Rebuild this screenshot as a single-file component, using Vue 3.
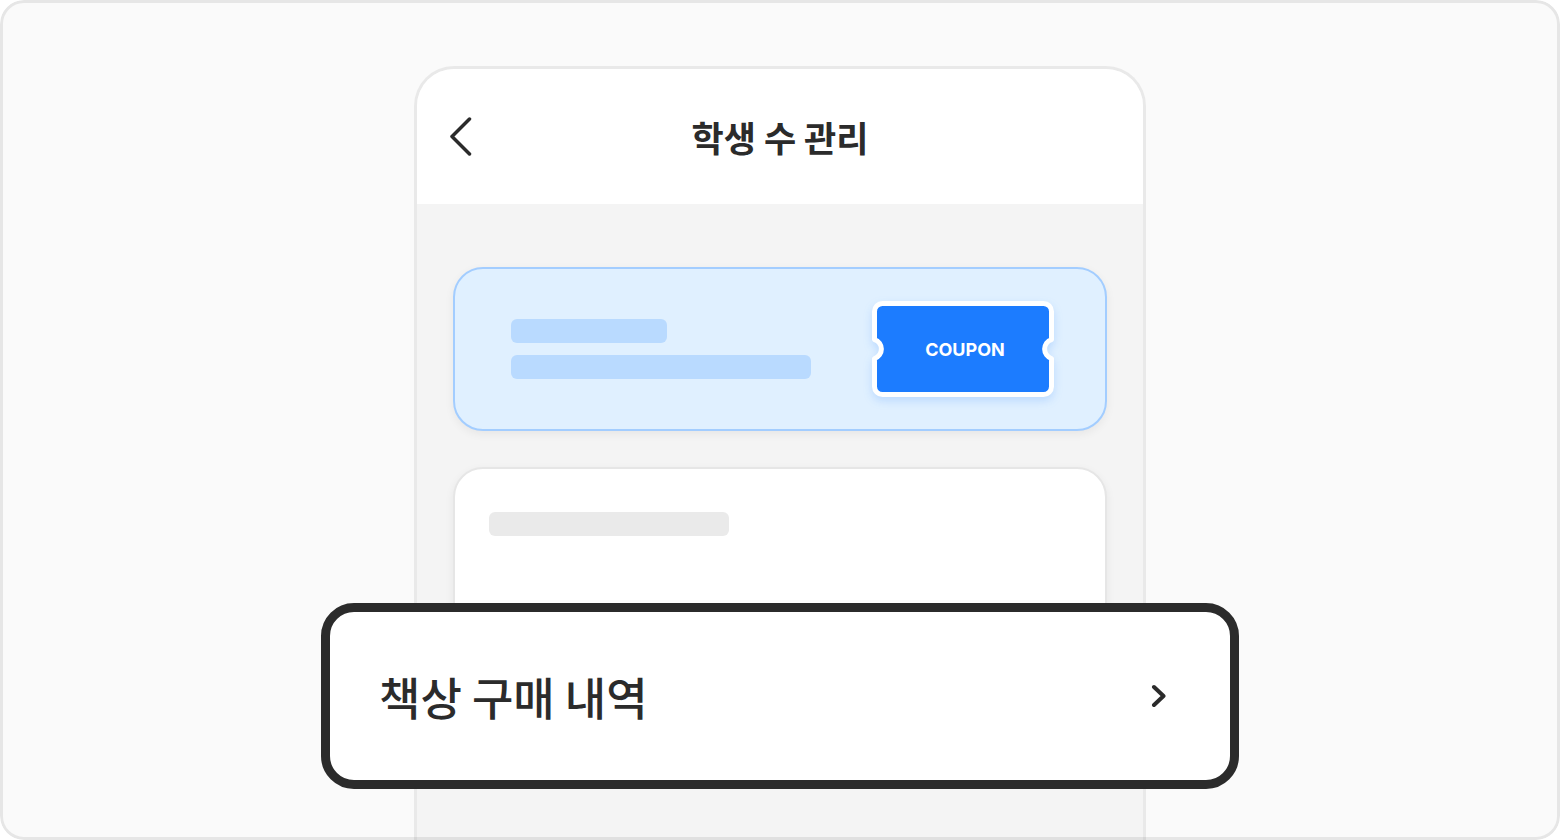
<script setup>
const title = '학생 수 관리'
const rowLabel = '책상 구매 내역'
</script>

<template>
  <main class="stage">
    <section class="phone">
      <header class="bar">
        <button class="back" type="button" aria-label="뒤로">
          <svg width="24" height="40" viewBox="0 0 24 40" fill="none" aria-hidden="true">
            <path d="M20.500 2 3 19.500l17.500 17.500" stroke="#2b2b2b" stroke-width="3.500" stroke-linecap="round" stroke-linejoin="round" />
          </svg>
        </button>
        <h1 class="title">{{ title }}</h1>
      </header>

      <div class="content">
        <article class="card promo">
          <div class="lines">
            <span class="line short"></span>
            <span class="line"></span>
          </div>
          <div class="coupon">
            <svg class="ticket" width="182" height="96" viewBox="0 0 182 96" aria-hidden="true">
              <path
                d="M10.500 2.500H171.500A8 8 0 0 1 179.500 10.500V38.500A10 10 0 0 0 179.500 57.500V85.500A8 8 0 0 1 171.500 93.500H10.500A8 8 0 0 1 2.500 85.500V57.500A10 10 0 0 0 2.500 38.500V10.500A8 8 0 0 1 10.500 2.500Z"
                fill="#1c7cff" stroke="#fff" stroke-width="5" stroke-linejoin="round"
              />
            </svg>
            <span class="coupon-text">COUPON</span>
          </div>
        </article>

        <article class="card panel">
          <span class="line gray"></span>
        </article>

        <button class="row" type="button">
          <span class="row-label">{{ rowLabel }}</span>
          <svg width="16" height="24" viewBox="0 0 16 24" fill="none" aria-hidden="true">
            <path d="M4 3l9.500 9L4 21" stroke="#2b2b2b" stroke-width="4" stroke-linecap="round" stroke-linejoin="round" />
          </svg>
        </button>
      </div>
    </section>
  </main>
</template>

<style>
body {
  background: #fff;
}
</style>

<style scoped>
* {
  box-sizing: border-box;
}

.stage {
  position: relative;
  display: flex;
  flex-direction: column;
  align-items: center;
  min-height: 100vh;
  padding-top: 66px;
  overflow: hidden;
  border-radius: 24px;
  background: #fafafa;
  color: #2b2b2b;
  font-family: "Noto Sans CJK KR", sans-serif;
}

.stage::after {
  content: "";
  position: absolute;
  inset: 0;
  border: 3px solid rgba(0, 0, 0, 0.08);
  border-radius: 24px;
  pointer-events: none;
}

.phone {
  flex: 1;
  width: 100%;
  max-width: 732px;
  border: 3px solid #e9e9e9;
  border-bottom: 0;
  border-radius: 40px 40px 0 0;
  background: #f4f4f4;
}

.bar {
  display: grid;
  grid-template-columns: 24px 1fr 24px;
  align-items: center;
  height: 135px;
  padding: 0 32px;
  border-radius: 37px 37px 0 0;
  background: #fff;
}

.back {
  display: block;
  height: 40px;
  padding: 0;
  border: 0;
  background: none;
}

.back svg,
.row svg,
.ticket {
  display: block;
}

.title {
  margin: 0;
  font-size: 35px;
  line-height: 48px;
  font-weight: 700;
  text-align: center;
}

.content {
  padding: 63px 36px 48px;
}

.card {
  border: 2px solid #e6e6e6;
  border-radius: 30px;
  background: #fff;
  box-shadow: 0 3px 10px rgba(0, 0, 0, 0.06);
}

.promo {
  display: flex;
  align-items: center;
  justify-content: space-between;
  height: 164px;
  padding: 0 51px 0 56px;
  border-color: #a3cdff;
  background: #e0f0ff;
}

.lines {
  display: grid;
  gap: 12px;
  width: 300px;
}

.line {
  display: block;
  height: 24px;
  border-radius: 6px;
  background: #b9daff;
}

.short {
  width: 156px;
}

.gray {
  width: 240px;
  background: #eaeaea;
}

.coupon {
  display: grid;
  place-items: center;
}

.ticket {
  grid-area: 1 / 1;
  filter: drop-shadow(0 4px 4px rgba(28, 124, 255, 0.18));
}

.coupon-text {
  position: relative;
  grid-area: 1 / 1;
  padding: 2px 0 0 4px;
  color: #fff;
  font-family: Inter, sans-serif;
  font-size: 18px;
  line-height: 24px;
  font-weight: 700;
}

.panel {
  height: 184px;
  margin-top: 36px;
  padding: 43px 34px;
}

.row {
  position: relative;
  display: flex;
  align-items: center;
  justify-content: space-between;
  width: calc(100% + 264px);
  height: 186px;
  margin: -48px -132px 0;
  padding: 0 64px 0 49px;
  border: 9px solid #2b2b2b;
  border-radius: 33px;
  background: #fff;
  color: inherit;
  font-family: inherit;
  font-size: 45px;
  line-height: 64px;
  font-weight: 500;
  text-align: left;
}

.row-label {
  padding-top: 2px;
}
</style>
